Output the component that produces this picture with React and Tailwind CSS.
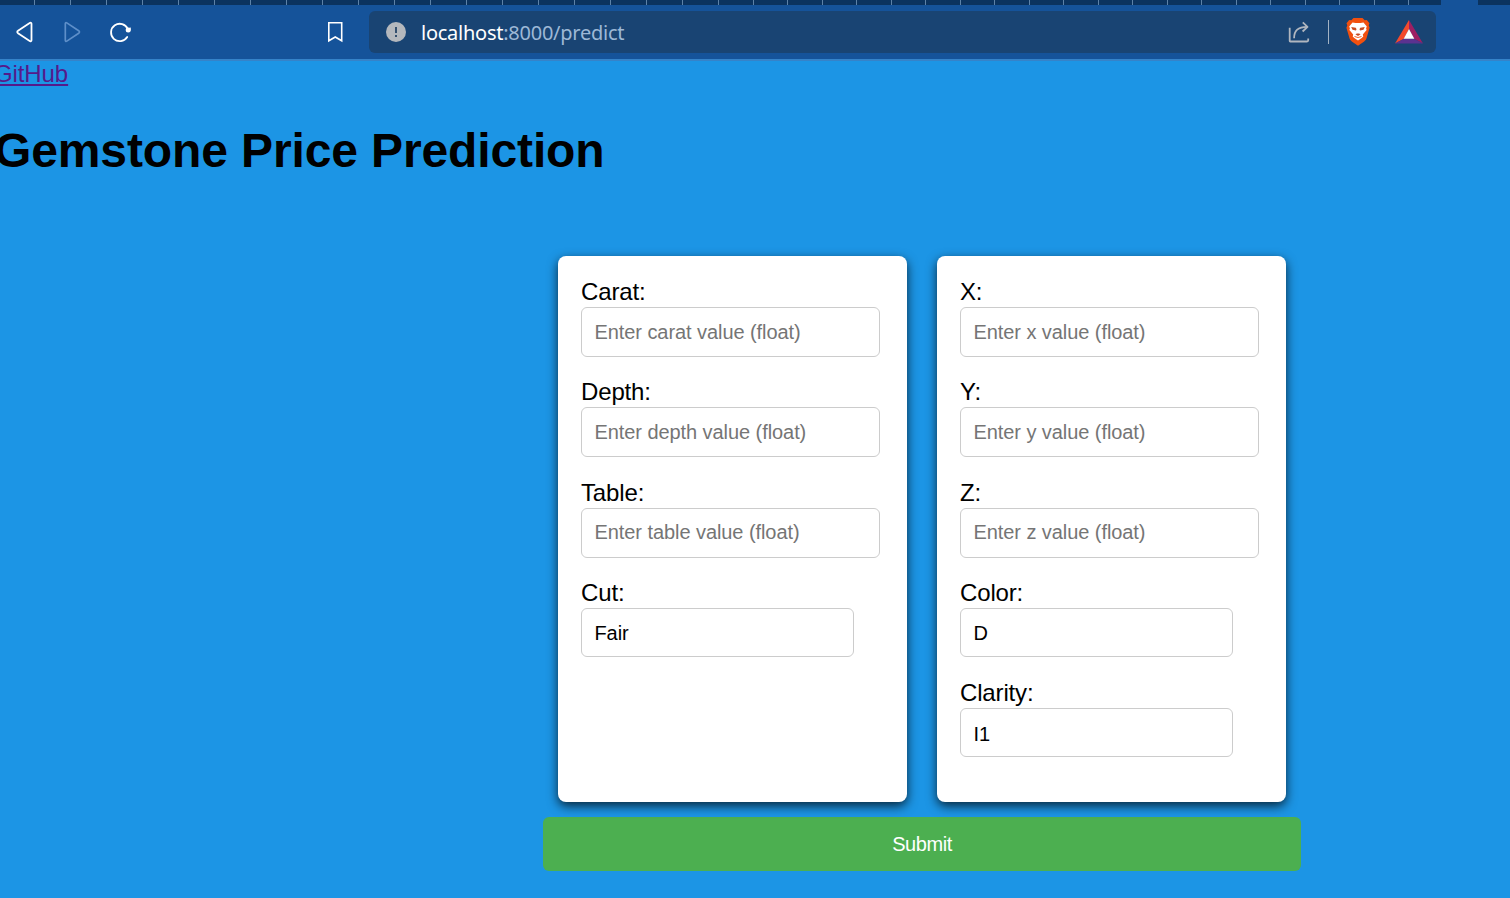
const narrowTabs = Array.from({ length: 19 }, (_, i) => i);
const laterTabs = Array.from({ length: 20 }, (_, i) => i);

function TabStrip() {
  return (
    <div className="flex h-[5px] bg-[#15539a]">
      <div className="flex w-[1441px] shrink-0 bg-[#0b335f]">
        <div className="w-[35px] shrink-0 border-r border-[#5d82a8]" />
        {narrowTabs.map((i) => (
          <div key={i} className="w-[36px] shrink-0 border-r border-[#5d82a8]" />
        ))}
        <div className="flex flex-1">
          {laterTabs.map((i) => (
            <div key={i} className="w-[34.5px] shrink-0 border-r border-[#5d82a8]" />
          ))}
        </div>
      </div>
      <div className="ml-[37px] flex-1 bg-[#0b335f]" />
    </div>
  );
}

function BackIcon() {
  return (
    <svg className="block h-6 w-6" viewBox="0 0 24 24" fill="none" stroke="#fff" strokeWidth="1.8" strokeLinejoin="round">
      <path d="M17.7 2.900c.9-.6 1.800-.1 1.800.9v16.400c0 1-.9 1.500-1.800.9L6 13.200c-1-.6-1-1.800 0-2.400Z" />
    </svg>
  );
}

function ForwardIcon() {
  return (
    <svg className="block h-6 w-6" viewBox="0 0 24 24" fill="none" stroke="#5e8fc9" strokeWidth="1.7" strokeLinejoin="round">
      <path d="M6.800 2.900c-.9-.6-1.500-.1-1.500.9v16.400c0 1 .6 1.500 1.500.9l11.900-7.900c1-.6 1-1.800 0-2.400Z" />
    </svg>
  );
}

function ReloadIcon() {
  return (
    <svg className="block h-6 w-6" viewBox="0 0 24 24" fill="none">
      <path d="M19.800 9.200A8.700 8.700 0 1 0 19.200 17" stroke="#fff" strokeWidth="1.8" strokeLinecap="round" />
      <circle cx="20.200" cy="10" r="2.500" fill="#fff" />
      <path d="m20.500 7.900 2.400-.4-.5 3.500Z" fill="#fff" />
    </svg>
  );
}

function BookmarkIcon() {
  return (
    <svg className="block h-6 w-6" viewBox="0 0 24 24" fill="none" stroke="#fff" strokeWidth="1.6">
      <path d="M5.800 2.800h12.900v18L12.250 17 5.800 20.800Z" />
    </svg>
  );
}

function ShareIcon() {
  return (
    <svg className="block h-6 w-6" viewBox="0 0 24 24" fill="none" stroke="#b0b6bf" strokeWidth="1.8" strokeLinejoin="round">
      <path d="M2.700 7.700v13.300c0 .3.200.5.500.5h16.800c.8 0 1.200-.4 1.200-1.200v-1.800" />
      <path d="M7.100 18.200C7.100 10.700 11 6.800 20 6.800" />
      <path d="M15.800 2.400 20.500 6.800l-4.900 4.700" />
    </svg>
  );
}

function LionIcon() {
  return (
    <svg className="block h-7 w-6" viewBox="0 0 24 28">
      <path d="M7.500 0h9l2.200 2.200 2.100-.3 2.700 3.300-.8 2 .9 2.500-3 10.400c-.4 1.500-1.200 2.400-2.400 3.300L12 27.800l-6.200-4.400c-1.200-.9-2-1.800-2.400-3.300L.4 9.700l.9-2.500-.8-2 2.700-3.300 2.100.3Z" fill="#f1500f" />
      <path d="m6.500 4.500 3 .5h5l3-.5 3.300 4-.7 1.800.5 1.700-3.800 4.400.5 2-1.600 1.500-3.700 2.700-3.700-2.700-1.600-1.500.5-2L3.400 12l.5-1.700-.7-1.800Z" fill="#fff" />
      <path d="m5.200 9 4.600.8.700 1.400-.5 1.300-3.500-.8Zm13.600 0-4.600.8-.7 1.400.5 1.300 3.500-.8ZM11 15.500h2l1.600.8-2.600 1.700-2.600-1.700Z" fill="#c84b22" />
      <path d="m8.500 18.500 3.500 1 3.500-1" fill="none" stroke="#f1500f" strokeWidth=".9" />
    </svg>
  );
}

function TriangleIcon() {
  return (
    <svg className="block h-6 w-7" viewBox="0 0 28 24">
      <path d="M14 0 0 23.500l9-4.700L14 9Z" fill="#f34a2c" />
      <path d="m14 0 14 23.500-9-4.700L14 9Z" fill="#9e1f63" />
      <path d="M0 23.500h28l-9-4.700H9Z" fill="#5b3290" />
      <path d="m14 9 5.300 9.800H8.700Z" fill="#fff" />
    </svg>
  );
}

function Toolbar() {
  return (
    <div className="flex h-[54px] items-center bg-[#15539a] pl-3">
      <div className="flex gap-6">
        <BackIcon />
        <ForwardIcon />
        <ReloadIcon />
      </div>
      <div className="ml-[191px]">
        <BookmarkIcon />
      </div>
      <div className="ml-[22px] flex h-[42px] w-[1067px] items-center rounded-md bg-[#194473] pl-[17px]">
        <div className="flex h-5 w-5 flex-col items-center justify-center gap-[2px] rounded-full bg-[#b4b8bd]">
          <span className="h-[6px] w-[2px] bg-[#34506f]" />
          <span className="h-[2px] w-[2px] bg-[#34506f]" />
        </div>
        <div className="ml-[15px] whitespace-nowrap pt-[2px] font-['Noto_Sans',sans-serif] text-[20px] leading-6 tracking-[-0.25px] text-[#9db8d6]">
          <span className="text-white">localhost</span>:8000/predict
        </div>
        <div className="ml-auto flex items-center pr-[13px]">
          <ShareIcon />
          <div className="ml-[17px] h-6 w-px bg-[#a3b3c4]" />
          <div className="ml-[17px]">
            <LionIcon />
          </div>
          <div className="ml-[25px]">
            <TriangleIcon />
          </div>
        </div>
      </div>
    </div>
  );
}

function Field({ label, placeholder, value }) {
  return (
    <label className="block h-[100.3px]">
      <span className="block h-[27px] text-[24px] leading-[23px] tracking-[-0.15px]">{label}</span>
      {placeholder ? (
        <input
          placeholder={placeholder}
          className="block h-[50px] w-[299px] rounded-[6px] border border-[#ccc] bg-white px-[12.5px] text-[20px] tracking-[-0.07px] placeholder:text-[#757575] placeholder:opacity-100"
        />
      ) : (
        <select className="block h-[49px] w-[273px] appearance-none rounded-[6px] border border-[#ccc] bg-white px-[12.5px] pt-[2px] text-[20px] tracking-[-0.1px]">
          <option>{value}</option>
        </select>
      )}
    </label>
  );
}

function Card({ children }) {
  return (
    <div className="h-[546px] w-[349px] rounded-[8px] bg-white pl-[23px] pt-[24px] shadow-[0_4px_11px_rgba(0,0,0,0.75)]">
      {children}
    </div>
  );
}

export default function App() {
  return (
    <div className="h-[898px] w-[1510px] overflow-hidden bg-[#1c95e5] font-['Liberation_Sans',Arial,sans-serif] text-black">
      <TabStrip />
      <Toolbar />
      <div className="h-[2px] bg-[#3583c9]" />
      <div className="-ml-[6px] h-[27px] text-[24px] leading-[25px] tracking-[-0.1px] text-[#551a8b]">
        <a className="underline" href="#github">GitHub</a>
      </div>
      <h1 className="-ml-[6px] mt-[35px] h-[56px] whitespace-nowrap text-[48px] font-bold leading-[56px] tracking-[-0.12px]">
        Gemstone Price Prediction
      </h1>
      <form className="ml-[543px] mt-[77px] w-[758px]">
        <div className="flex gap-[30px] px-[15px]">
          <Card>
            <Field label="Carat:" placeholder="Enter carat value (float)" />
            <Field label="Depth:" placeholder="Enter depth value (float)" />
            <Field label="Table:" placeholder="Enter table value (float)" />
            <Field label="Cut:" value="Fair" />
          </Card>
          <Card>
            <Field label="X:" placeholder="Enter x value (float)" />
            <Field label="Y:" placeholder="Enter y value (float)" />
            <Field label="Z:" placeholder="Enter z value (float)" />
            <Field label="Color:" value="D" />
            <Field label="Clarity:" value="I1" />
          </Card>
        </div>
        <button type="button" className="mt-[15px] block h-[54px] w-full rounded-[6px] bg-[#4caf50] text-[20px] tracking-[-0.45px] text-white">
          Submit
        </button>
      </form>
    </div>
  );
}
